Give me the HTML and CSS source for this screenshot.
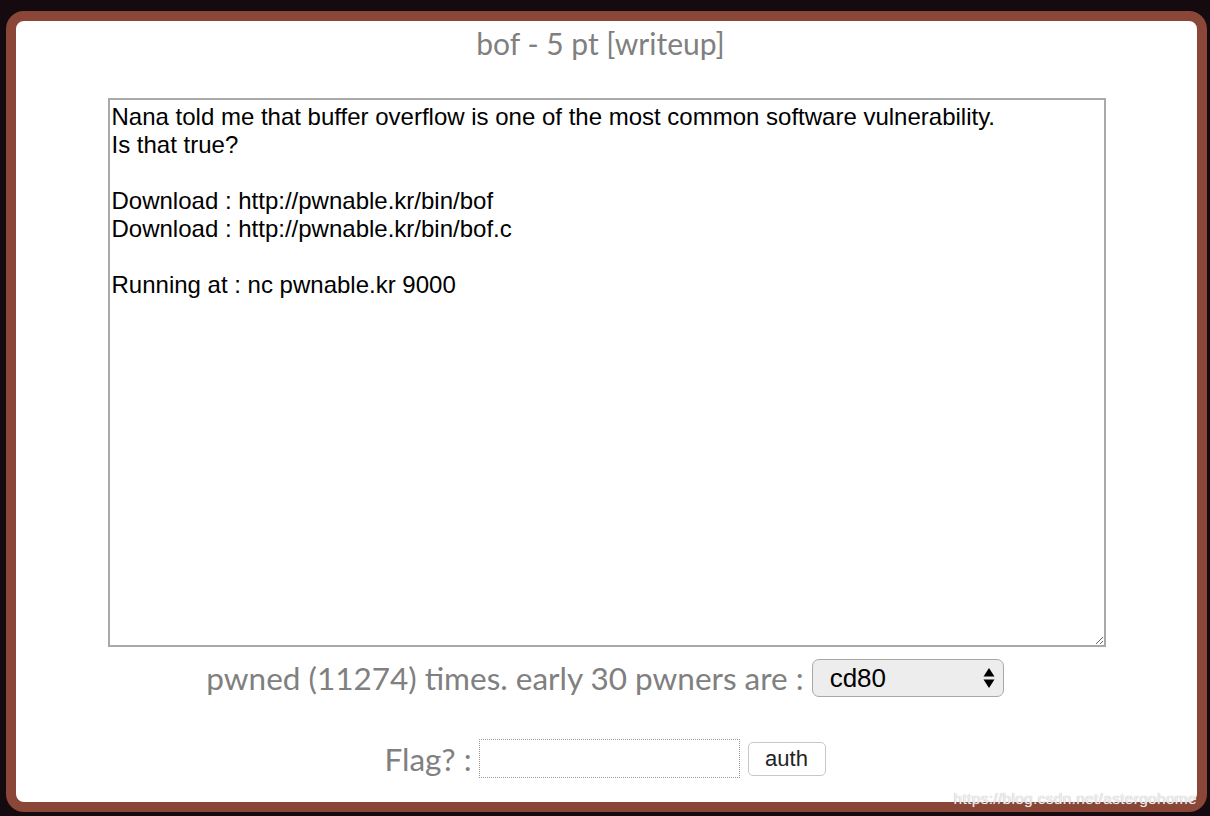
FILE: index.html
```html
<!DOCTYPE html>
<html>
<head>
<meta charset="utf-8">
<title>bof</title>
<link rel="stylesheet" href="styles.css">
</head>
<body>
<div class="frame">
  <h1 class="title">bof - 5 pt [writeup]</h1>
  <textarea class="desc" readonly>Nana told me that buffer overflow is one of the most common software vulnerability.
Is that true?

Download : http://pwnable.kr/bin/bof
Download : http://pwnable.kr/bin/bof.c

Running at : nc pwnable.kr 9000</textarea>
  <div class="pwned">
    <span class="label">pwned (11274) times. early 30 pwners are :</span>
    <div class="select-wrap">
      <select class="pwners"><option>cd80</option></select>
      <svg class="arrows" width="12" height="22" viewBox="0 0 12 22"><path d="M6 1 L11.5 9.5 H0.5 Z" fill="#000"/><path d="M6 21 L11.5 12.5 H0.5 Z" fill="#000"/></svg>
    </div>
  </div>
  <div class="flag">
    <span class="label">Flag? :</span>
    <input class="flag-input" type="text">
    <button class="auth">auth</button>
  </div>
  <div class="watermark">https://blog.csdn.net/astergohome</div>
</div>
</body>
</html>
```
FILE: styles.css
```css
html, body {
  margin: 0;
  padding: 0;
  background: #140a10;
}
body {
  width: 1210px;
  height: 816px;
  overflow: hidden;
}
.frame {
  position: relative;
  box-sizing: border-box;
  width: 1201px;
  height: 801px;
  margin: 11px 0 0 6px;
  border: 10px solid #8a4637;
  border-radius: 18px;
  background: #fff;
  display: flex;
  flex-direction: column;
  align-items: center;
}
.title {
  margin: 4px 12px 0 0;
  font-family: Lato, "Open Sans", sans-serif;
  font-weight: normal;
  font-size: 30px;
  line-height: 36px;
  color: #808080;
}
.desc {
  box-sizing: border-box;
  width: 998px;
  height: 549px;
  margin-top: 37px;
  padding: 3px 2px;
  border: 2px solid #a9a9a9;
  font-family: "Liberation Sans", Arial, sans-serif;
  font-size: 24px;
  line-height: 28px;
  color: #000;
  background: #fff;
  resize: both;
  outline: none;
}
.pwned {
  display: flex;
  align-items: center;
  gap: 8px;
  margin-top: 12px;
  margin-right: 3px;
}
.label {
  font-family: Lato, "Open Sans", sans-serif;
  font-size: 31.5px;
  color: #808080;
}
.select-wrap {
  position: relative;
  width: 192px;
  height: 38px;
}
.pwners {
  appearance: none;
  -webkit-appearance: none;
  box-sizing: border-box;
  width: 192px;
  height: 38px;
  padding: 0 0 0 17px;
  border: 1px solid #a8a8a8;
  border-radius: 7px;
  background: #ededed;
  font-family: "Liberation Sans", Arial, sans-serif;
  font-size: 26px;
  color: #000;
}
.arrows {
  position: absolute;
  right: 9px;
  top: 8px;
}
.flag {
  display: flex;
  align-items: center;
  margin-top: 42px;
  margin-right: 3px;
}
.flag .label {
  margin-right: 7px;
}
.flag-input {
  box-sizing: border-box;
  width: 261px;
  height: 39px;
  border: 1px dotted #999;
  padding: 2px 4px;
  margin: 0;
  font-size: 20px;
}
.auth {
  box-sizing: border-box;
  width: 78px;
  height: 34px;
  margin-left: 8px;
  border: 1px solid #c8c8c8;
  border-radius: 5px;
  background: #fff;
  font-family: "Liberation Sans", Arial, sans-serif;
  font-size: 22px;
  color: #222;
  padding: 0;
}
.watermark {
  position: absolute;
  right: 0;
  bottom: -6px;
  font-family: "Liberation Sans", Arial, sans-serif;
  font-size: 15.5px;
  color: rgba(255,255,255,0.85);
  text-shadow: 0 0 1px #999;
  letter-spacing: 0.3px;
}
```
